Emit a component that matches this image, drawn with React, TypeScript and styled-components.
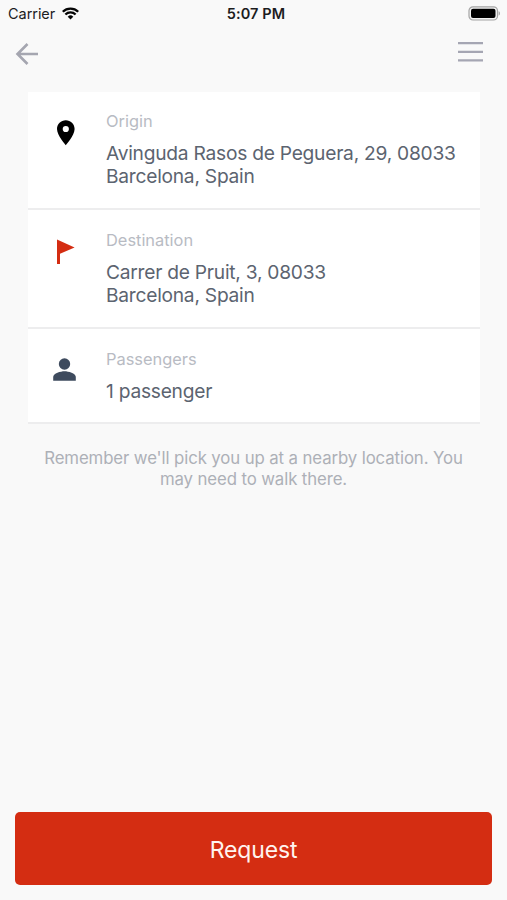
import React from "react";
import styled, { createGlobalStyle } from "styled-components";

const GlobalStyle = createGlobalStyle`
  * { box-sizing: border-box; }
  body { margin: 0; background: #f9f9f9; font-family: Inter, "Liberation Sans", sans-serif; }
`;

const Screen = styled.div`
  display: flex;
  flex-direction: column;
  width: 507px;
  height: 900px;
  background: #f9f9f9;
`;

const StatusBar = styled.div`
  display: grid;
  grid-template-columns: 1fr auto 1fr;
  align-items: center;
  height: 27px;
  padding: 0 6px 0 8px;
  color: #1c1c1e;
  font-size: 14.5px;
`;

const Carrier = styled.div`
  display: flex;
  align-items: center;
  gap: 7px;
  letter-spacing: -0.05px;
`;

const Clock = styled.div`
  padding-left: 3px;
  font-weight: 600;
  letter-spacing: 0.12px;
`;

const BatterySlot = styled.div`
  display: flex;
  justify-content: flex-end;
`;

const NavBar = styled.nav`
  display: flex;
  justify-content: space-between;
  height: 65px;
  padding: 14px 24px 0 15px;
`;

const NavButton = styled.button`
  display: flex;
  align-items: flex-start;
  height: 28px;
  padding: 0;
  border: 0;
  background: none;
`;

const Card = styled.section`
  width: 452px;
  margin-left: 28px;
  background: #fff;
`;

const Row = styled.div<{ $height: number; $top: number }>`
  display: grid;
  grid-template-columns: 78px 1fr;
  height: ${(p) => p.$height}px;
  padding-top: ${(p) => p.$top}px;
  border-bottom: 2px solid #ededee;
`;

const RowIcon = styled.div`
  padding: 7px 0 0 22px;
`;

const Label = styled.div`
  height: 23px;
  color: #b8bbc3;
  font-size: 16.4px;
  line-height: 23px;
`;

const Value = styled.div`
  margin-top: 9px;
  color: #5c6470;
  font-size: 19.2px;
  line-height: 23.4px;
  letter-spacing: -0.25px;
  white-space: nowrap;
`;

const Note = styled.p`
  margin: 24px 0 0;
  color: #adb0b7;
  font-size: 16.8px;
  line-height: 20.5px;
  letter-spacing: -0.11px;
  text-align: center;
`;

const RequestButton = styled.button`
  height: 73px;
  margin: auto 15px 15px;
  border: 0;
  border-radius: 5px;
  background: #d42d12;
  color: #fff4ef;
  font: 400 23px/74px Inter, "Liberation Sans", sans-serif;
  letter-spacing: -0.15px;
`;

const Wifi = () => (
  <svg width="17" height="13" viewBox="0 0 17 13" fill="none" stroke="#050505" strokeWidth="2.3">
    <path d="M.8 4.8a11 11 0 0 1 15.4 0M3.4 7.5a7.3 7.3 0 0 1 10.2 0" />
    <path d="M8.5 12.5 5.7 9.7a4 4 0 0 1 5.600 0z" fill="#050505" stroke="none" />
  </svg>
);

const Battery = () => (
  <svg width="33" height="15" viewBox="0 0 33 15">
    <rect x="1" y=".8" width="28.5" height="13.2" rx="4" fill="#f4f4f4" stroke="#a4a4a4" strokeWidth="1.2" />
    <rect x="3" y="2.8" width="24.5" height="9.2" rx="2" fill="#000" />
    <path d="M30.6 5.2c1.8.6 1.8 3.8 0 4.4z" fill="#a4a4a4" />
  </svg>
);

const BackArrow = () => (
  <svg width="24" height="26" viewBox="0 0 24 26" fill="none" stroke="#a5a6b0" strokeWidth="2.6">
    <path d="M12.500 3 2.500 13l10 10M2.500 13H23" />
  </svg>
);

const MenuLines = () => (
  <svg width="26" height="24" viewBox="0 0 26 24" fill="none" stroke="#a5a6b3" strokeWidth="2.2">
    <path d="M1 2.200h25M1 10.800h25M1 19.400h25" />
  </svg>
);

const Pin = () => (
  <svg width="32" height="32" viewBox="0 0 32 32">
    <path
      fill="#000"
      fillRule="evenodd"
      d="M15.8 3.3C11 3.3 7 7.2 7 12c0 6.6 8.8 16.2 8.8 16.2S24.6 18.6 24.6 12C24.6 7.2 20.6 3.3 15.8 3.3zm0 5.6a3.1 3.1 0 1 1 0 6.2 3.1 3.1 0 0 1 0-6.200z"
    />
  </svg>
);

const Flag = () => (
  <svg width="32" height="32" viewBox="0 0 32 32">
    <path fill="#d42d12" d="M7 3.6 24.6 11.5 10 17.800V28H7z" />
  </svg>
);

const Person = () => (
  <svg width="32" height="32" viewBox="0 0 32 32" fill="#3e4b5e">
    <circle cx="14.5" cy="9" r="5.7" />
    <path d="M3.2 25.800V22c0-3.700 7.500-5.800 11.300-5.800S25.800 18.300 25.800 22v3.800z" />
  </svg>
);

export default function App() {
  return (
    <Screen>
      <GlobalStyle />
      <StatusBar>
        <Carrier>
          Carrier <Wifi />
        </Carrier>
        <Clock>5:07 PM</Clock>
        <BatterySlot>
          <Battery />
        </BatterySlot>
      </StatusBar>
      <NavBar>
        <NavButton aria-label="Back">
          <BackArrow />
        </NavButton>
        <NavButton aria-label="Menu">
          <MenuLines />
        </NavButton>
      </NavBar>
      <Card>
        <Row $height={118} $top={18}>
          <RowIcon><Pin /></RowIcon>
          <div>
            <Label>Origin</Label>
            <Value>Avinguda Rasos de Peguera, 29, 08033<br />Barcelona, Spain</Value>
          </div>
        </Row>
        <Row $height={119} $top={19}>
          <RowIcon><Flag /></RowIcon>
          <div>
            <Label>Destination</Label>
            <Value>Carrer de Pruit, 3, 08033<br />Barcelona, Spain</Value>
          </div>
        </Row>
        <Row $height={95} $top={19}>
          <RowIcon><Person /></RowIcon>
          <div>
            <Label>Passengers</Label>
            <Value>1 passenger</Value>
          </div>
        </Row>
      </Card>
      <Note>
        Remember we'll pick you up at a nearby location. You
        <br />
        may need to walk there.
      </Note>
      <RequestButton>Request</RequestButton>
    </Screen>
  );
}
